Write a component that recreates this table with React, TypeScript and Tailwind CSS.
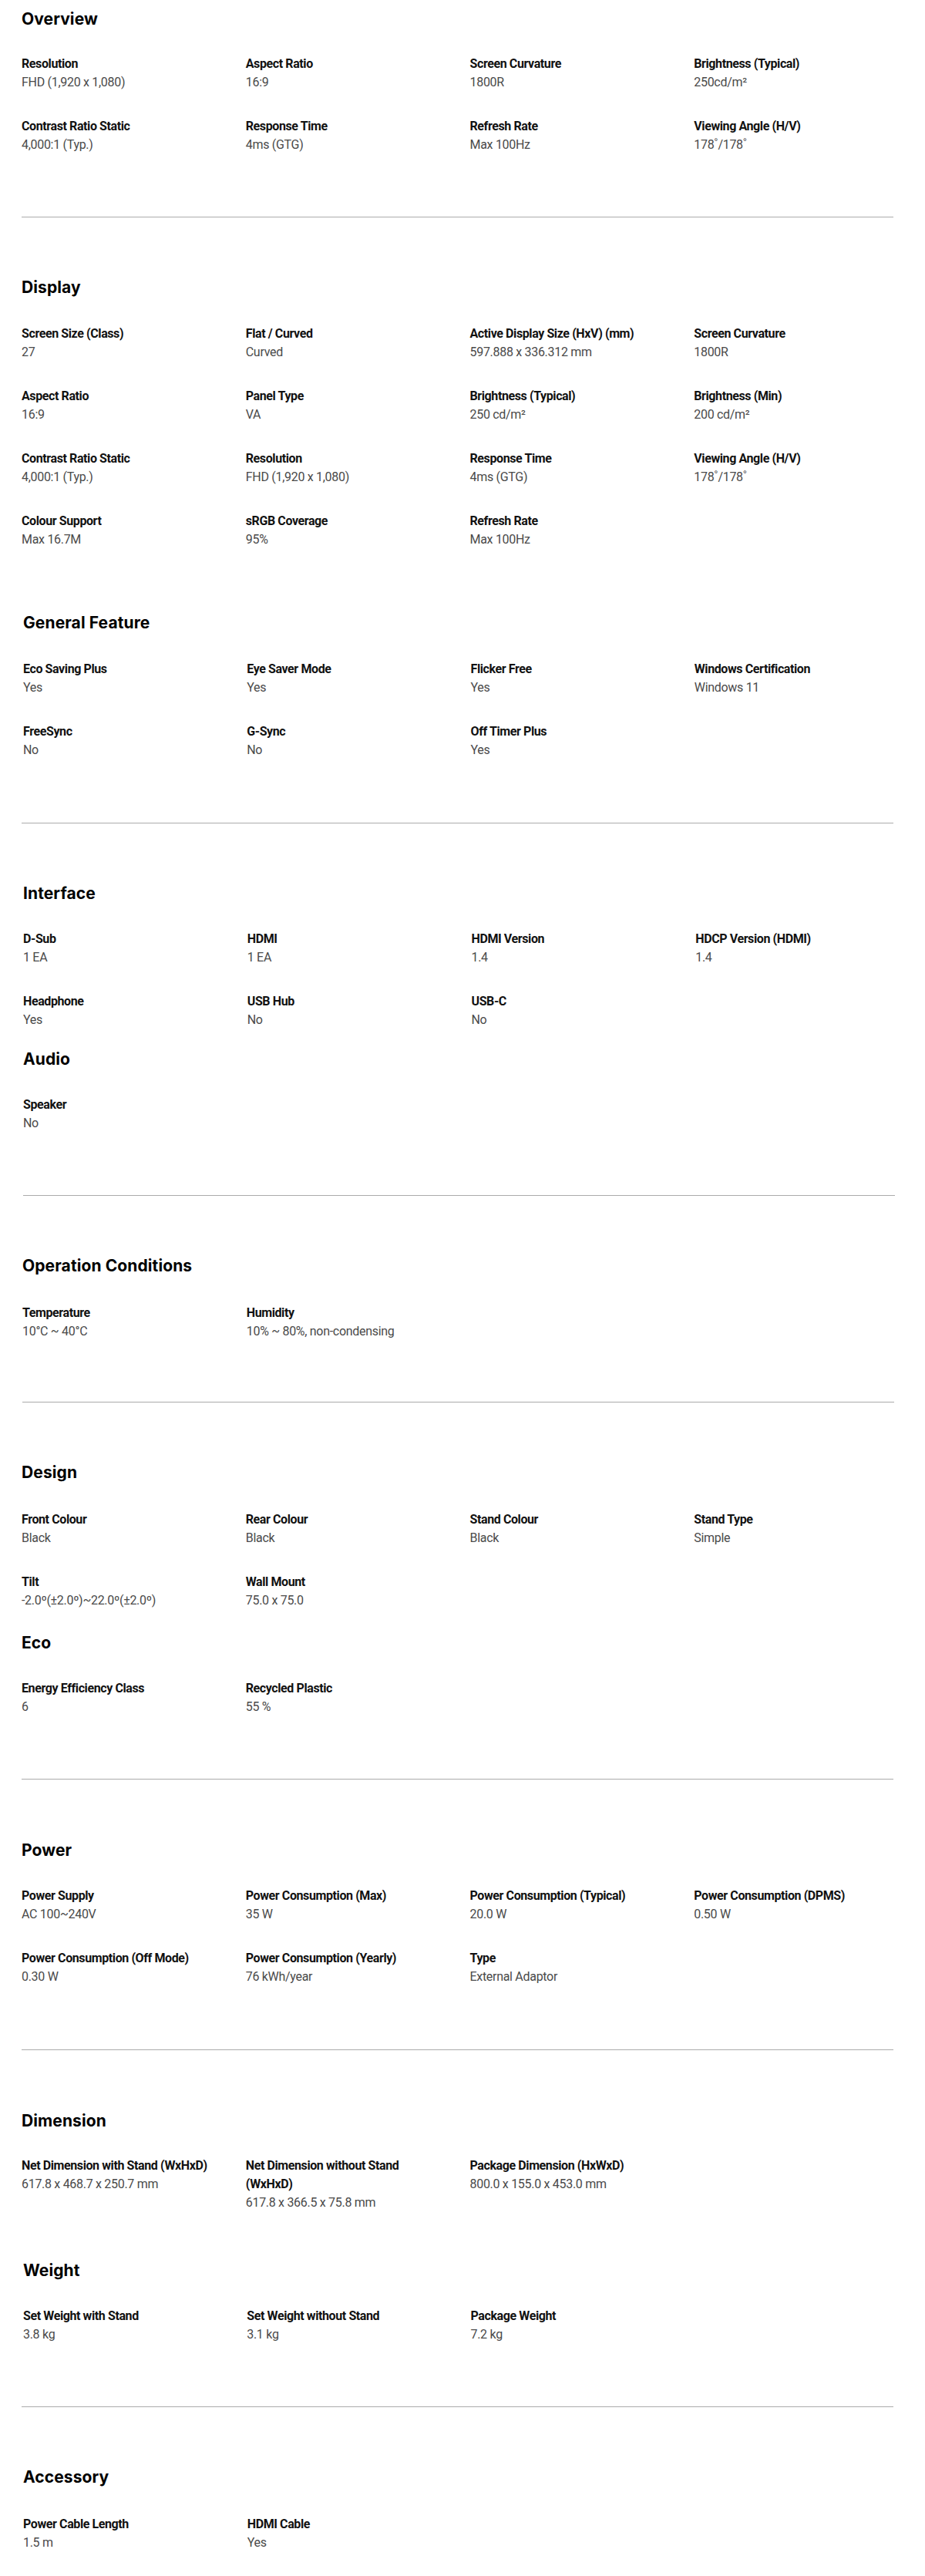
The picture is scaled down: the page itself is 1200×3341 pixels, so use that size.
type Spec = [string, string]

interface Block {
  title: string
  // spacing above the block (for sub-sections) and between title and grid
  mt?: string
  gap: string
  items: Spec[]
}

interface Group {
  pad: string
  indent: string
  divider: boolean
  blocks: Block[]
}

const groups: Group[] = [
  {
    pad: 'pt-[11px] pb-[81px]',
    indent: 'pl-[28px]',
    divider: true,
    blocks: [
      {
        title: 'Overview',
        gap: 'mt-[32px]',
        items: [
          ['Resolution', 'FHD (1,920 x 1,080)'],
          ['Aspect Ratio', '16:9'],
          ['Screen Curvature', '1800R'],
          ['Brightness (Typical)', '250cd/m²'],
          ['Contrast Ratio Static', '4,000:1 (Typ.)'],
          ['Response Time', '4ms (GTG)'],
          ['Refresh Rate', 'Max 100Hz'],
          ['Viewing Angle (H/V)', '178˚/178˚'],
        ],
      },
    ],
  },
  {
    pad: 'pt-[77px] pb-[82px]',
    indent: 'pl-[28px]',
    divider: true,
    blocks: [
      {
        title: 'Display',
        gap: 'mt-[34px]',
        items: [
          ['Screen Size (Class)', '27'],
          ['Flat / Curved', 'Curved'],
          ['Active Display Size (HxV) (mm)', '597.888 x 336.312 mm'],
          ['Screen Curvature', '1800R'],
          ['Aspect Ratio', '16:9'],
          ['Panel Type', 'VA'],
          ['Brightness (Typical)', '250 cd/m²'],
          ['Brightness (Min)', '200 cd/m²'],
          ['Contrast Ratio Static', '4,000:1 (Typ.)'],
          ['Resolution', 'FHD (1,920 x 1,080)'],
          ['Response Time', '4ms (GTG)'],
          ['Viewing Angle (H/V)', '178˚/178˚'],
          ['Colour Support', 'Max 16.7M'],
          ['sRGB Coverage', '95%'],
          ['Refresh Rate', 'Max 100Hz'],
        ],
      },
      {
        title: 'General Feature',
        mt: 'mt-[82px] pl-[2px]',
        gap: 'mt-[34px]',
        items: [
          ['Eco Saving Plus', 'Yes'],
          ['Eye Saver Mode', 'Yes'],
          ['Flicker Free', 'Yes'],
          ['Windows Certification', 'Windows 11'],
          ['FreeSync', 'No'],
          ['G-Sync', 'No'],
          ['Off Timer Plus', 'Yes'],
        ],
      },
    ],
  },
  {
    pad: 'pt-[77px] pb-[81px]',
    indent: 'pl-[30px]',
    divider: true,
    blocks: [
      {
        title: 'Interface',
        gap: 'mt-[33px]',
        items: [
          ['D-Sub', '1 EA'],
          ['HDMI', '1 EA'],
          ['HDMI Version', '1.4'],
          ['HDCP Version (HDMI)', '1.4'],
          ['Headphone', 'Yes'],
          ['USB Hub', 'No'],
          ['USB-C', 'No'],
        ],
      },
      {
        title: 'Audio',
        mt: 'mt-[25px]',
        gap: 'mt-[33px]',
        items: [['Speaker', 'No']],
      },
    ],
  },
  {
    pad: 'pt-[77px] pb-[79px]',
    indent: 'pl-[29px]',
    divider: true,
    blocks: [
      {
        title: 'Operation Conditions',
        gap: 'mt-[35px]',
        items: [
          ['Temperature', '10°C ~ 40°C'],
          ['Humidity', '10% ~ 80%, non-condensing'],
        ],
      },
    ],
  },
  {
    pad: 'pt-[77px] pb-[81px]',
    indent: 'pl-[28px]',
    divider: true,
    blocks: [
      {
        title: 'Design',
        gap: 'mt-[35px]',
        items: [
          ['Front Colour', 'Black'],
          ['Rear Colour', 'Black'],
          ['Stand Colour', 'Black'],
          ['Stand Type', 'Simple'],
          ['Tilt', '-2.0º(±2.0º)~22.0º(±2.0º)'],
          ['Wall Mount', '75.0 x 75.0'],
        ],
      },
      {
        title: 'Eco',
        mt: 'mt-[29px]',
        gap: 'mt-[33px]',
        items: [
          ['Energy Efficiency Class', '6'],
          ['Recycled Plastic', '55 %'],
        ],
      },
    ],
  },
  {
    pad: 'pt-[78px] pb-[82px]',
    indent: 'pl-[28px]',
    divider: true,
    blocks: [
      {
        title: 'Power',
        gap: 'mt-[33px]',
        items: [
          ['Power Supply', 'AC 100~240V'],
          ['Power Consumption (Max)', '35 W'],
          ['Power Consumption (Typical)', '20.0 W'],
          ['Power Consumption (DPMS)', '0.50 W'],
          ['Power Consumption (Off Mode)', '0.30 W'],
          ['Power Consumption (Yearly)', '76 kWh/year'],
          ['Type', 'External Adaptor'],
        ],
      },
    ],
  },
  {
    pad: 'pt-[78px] pb-[81px]',
    indent: 'pl-[28px]',
    divider: true,
    blocks: [
      {
        title: 'Dimension',
        gap: 'mt-[32px]',
        items: [
          ['Net Dimension with Stand (WxHxD)', '617.8 x 468.7 x 250.7 mm'],
          ['Net Dimension without Stand (WxHxD)', '617.8 x 366.5 x 75.8 mm'],
          ['Package Dimension (HxWxD)', '800.0 x 155.0 x 453.0 mm'],
        ],
      },
      {
        title: 'Weight',
        mt: 'mt-[62px] pl-[2px]',
        gap: 'mt-[33px]',
        items: [
          ['Set Weight with Stand', '3.8 kg'],
          ['Set Weight without Stand', '3.1 kg'],
          ['Package Weight', '7.2 kg'],
        ],
      },
    ],
  },
  {
    pad: 'pt-[77px] pb-[32px]',
    indent: 'pl-[30px]',
    divider: false,
    blocks: [
      {
        title: 'Accessory',
        gap: 'mt-[35px]',
        items: [
          ['Power Cable Length', '1.5 m'],
          ['HDMI Cable', 'Yes'],
        ],
      },
    ],
  },
]

function SpecItem({ label, value }: { label: string; value: string }) {
  return (
    <div className="flex flex-col">
      <span className="text-[16px] leading-[24px] font-bold tracking-[-0.4px] text-[#111]">{label}</span>
      <span className="text-[16px] leading-[24px] font-normal tracking-[-0.3px] text-[#4a4a4a]">{value}</span>
    </div>
  )
}

function SpecBlock({ block }: { block: Block }) {
  return (
    <div className={block.mt ?? ''}>
      <h2
        className="h-[28px] text-[21px] leading-[28px] font-bold tracking-[0.1px] text-black"
        style={{ fontFamily: 'Inter, "Noto Sans", sans-serif' }}
      >
        {block.title}
      </h2>
      <div className={`${block.gap} grid grid-cols-4 gap-x-[31px] gap-y-[33px]`}>
        {block.items.map(([label, value]) => (
          <SpecItem key={label + value} label={label} value={value} />
        ))}
      </div>
    </div>
  )
}

export default function App() {
  return (
    <div className="min-h-[3341px] w-[1200px] bg-white" style={{ fontFamily: 'Roboto, "Liberation Sans", sans-serif' }}>
      {groups.map((g, i) => (
        <section key={i} className={g.indent}>
          <div className={`${g.pad} w-[1132px]`}>
            {g.blocks.map((b) => (
              <SpecBlock key={b.title} block={b} />
            ))}
          </div>
          {g.divider && <div className="h-px w-[1131px] bg-[#ababab]" />}
        </section>
      ))}
    </div>
  )
}
